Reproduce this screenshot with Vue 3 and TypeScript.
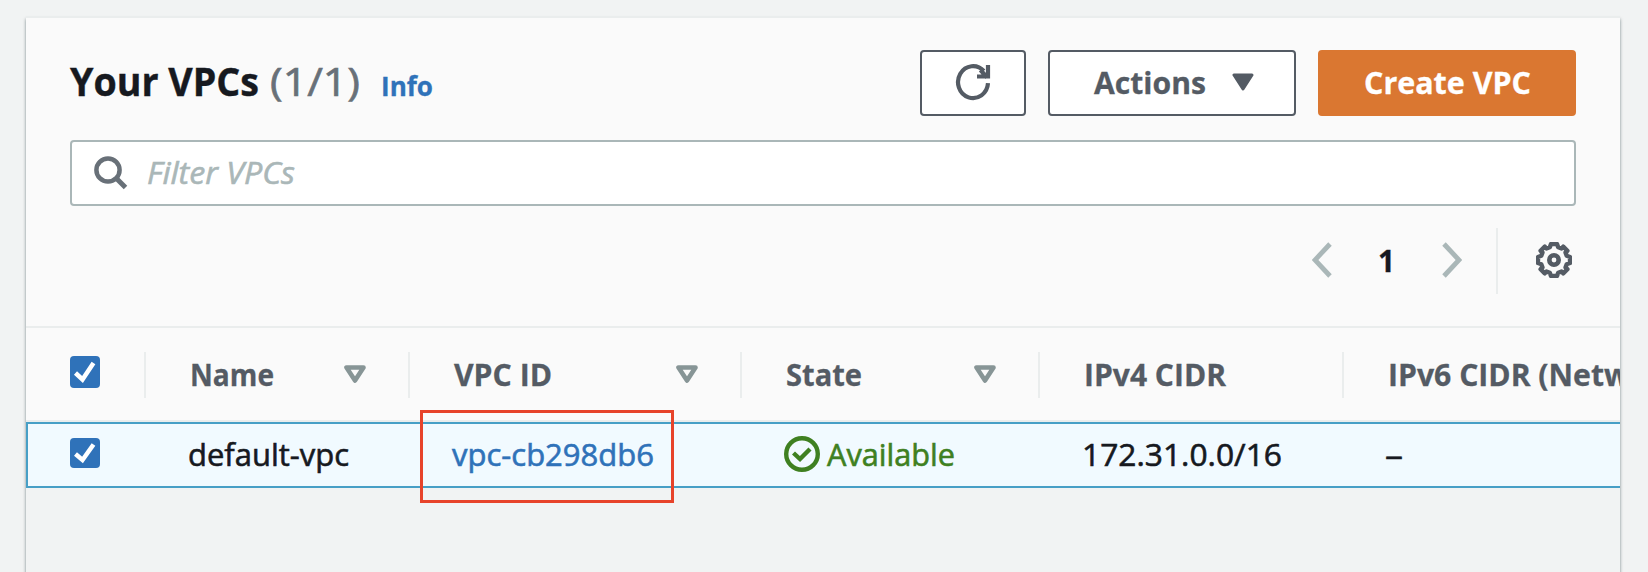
<script setup lang="ts">
import type { Directive } from 'vue'

interface Column {
  key: string
  label: string
  width: number
  sortable: boolean
}

// Sets a label to a given advance width, in pixels, by condensing its glyphs.
const vFit: Directive<HTMLElement, number> = {
  mounted(el, binding) {
    const natural = el.getBoundingClientRect().width
    el.style.transform = `scaleX(${binding.value / natural})`
    el.style.marginRight = `${binding.value - natural}px`
  },
}

const columns: Column[] = [
  { key: 'name', label: 'Name', width: 84, sortable: true },
  { key: 'id', label: 'VPC ID', width: 98, sortable: true },
  { key: 'state', label: 'State', width: 76, sortable: true },
  { key: 'ipv4', label: 'IPv4 CIDR', width: 142, sortable: false },
  { key: 'ipv6', label: 'IPv6 CIDR (Network border group)', width: 509, sortable: false },
]
</script>

<template>
  <main class="page">
    <section class="panel">
      <header class="top">
        <div class="title-row">
          <h1><span v-fit="189" class="t">Your VPCs</span></h1>
          <span v-fit="90" class="t count">(1/1)</span>
          <a v-fit="52" class="t info">Info</a>
          <div class="buttons">
            <button class="btn refresh" aria-label="Refresh">
              <svg width="36" height="38" viewBox="0 0 36 38">
                <path d="M33 20.200a15 16 0 1 1-4.200-12.200" fill="none" stroke="currentColor" stroke-width="4.200" />
                <path d="M33 2v11.500H22M32 14.500L25.500 7" fill="none" stroke="currentColor" stroke-width="4.200" />
              </svg>
            </button>
            <button class="btn actions">
              <span v-fit="112" class="t">Actions</span>
              <svg class="caret" width="22" height="18" viewBox="0 0 22 18">
                <path d="M2 2h18l-9 14z" fill="currentColor" stroke="currentColor" stroke-width="3" stroke-linejoin="round" />
              </svg>
            </button>
            <button class="btn primary"><span v-fit="167" class="t">Create VPC</span></button>
          </div>
        </div>
        <div class="search">
          <svg width="34" height="34" viewBox="0 0 34 34">
            <circle cx="14" cy="14" r="11.600" fill="none" stroke="#687078" stroke-width="4.500" />
            <path d="M22 22l9.500 9.500" stroke="#687078" stroke-width="5" />
          </svg>
          <span v-fit="148" class="t placeholder">Filter VPCs</span>
        </div>
        <div class="pager">
          <svg class="prev" width="20" height="36" viewBox="0 0 20 36">
            <path d="M18 2L3 18l15 16" />
          </svg>
          <span v-fit="17" class="t current">1</span>
          <svg class="next" width="20" height="36" viewBox="0 0 20 36">
            <path d="M2 2l15 16L2 34" />
          </svg>
          <div class="settings">
            <svg width="36" height="36" viewBox="-18 -18 36 36" fill="none" stroke="#545b64">
              <path
                stroke-width="4.400"
                stroke-linejoin="round"
                d="M-3-16H3L4.200-12.700L7.500-11.500L9.200-13.400L13.400-9.200L11.500-7.500L12.700-4.200L16-3V3L12.700 4.200L11.500 7.500L13.400 9.200L9.200 13.400L7.500 11.500L4.200 12.700L3 16H-3L-4.200 12.700L-7.500 11.500L-9.200 13.400L-13.400 9.200L-11.500 7.500L-12.700 4.200L-16 3V-3L-12.700-4.200L-11.500-7.500L-13.400-9.200L-9.200-13.400L-7.500-11.500L-4.200-12.700Z"
              />
              <circle r="4.700" stroke-width="4.600" />
            </svg>
          </div>
        </div>
      </header>

      <div class="row head">
        <div class="cell select">
          <svg class="box" width="30" height="32" viewBox="0 0 30 32">
            <rect width="30" height="32" rx="4" />
            <path d="M5.500 17l7 6.500L23.500 7" />
          </svg>
        </div>
        <div v-for="col in columns" :key="col.key" class="cell">
          <span v-fit="col.width" class="t">{{ col.label }}</span>
          <svg v-if="col.sortable" class="sort" width="22" height="18" viewBox="0 0 22 18">
            <path d="M2.500 2.500h17L11 15.500z" fill="none" stroke="#879596" stroke-width="4.600" stroke-linejoin="round" />
          </svg>
        </div>
      </div>

      <div class="row body">
        <div class="cell select">
          <svg class="box" width="30" height="30" viewBox="0 0 30 30">
            <rect width="30" height="30" rx="4" />
            <path d="M5.500 16l7 6L23.500 6.500" />
          </svg>
        </div>
        <div class="cell"><span v-fit="161" class="t">default-vpc</span></div>
        <div class="cell marked"><a v-fit="202" class="t link">vpc-cb298db6</a></div>
        <div class="cell state">
          <svg width="36" height="36" viewBox="0 0 36 36" fill="none" stroke="currentColor">
            <circle cx="18" cy="18" r="15.800" stroke-width="4.400" />
            <path d="M9.500 17l6.500 6 10-10" stroke-width="4.400" />
          </svg>
          <span v-fit="128" class="t">Available</span>
        </div>
        <div class="cell"><span v-fit="200" class="t">172.31.0.0/16</span></div>
        <div class="cell dash"><span v-fit="18" class="t">–</span></div>
      </div>
    </section>
  </main>
</template>

<style>
body {
  margin: 0;
  overflow: hidden;
}
</style>

<style scoped>
* {
  box-sizing: border-box;
}
.page {
  height: 572px;
  padding: 16px 28px 0 26px;
  overflow: hidden;
  background: #f1f3f3;
  color: #16191f;
  font: 400 31px/44px 'Open Sans', 'Noto Sans', sans-serif;
}
.panel {
  width: 1594px;
  height: 600px;
  border-top: 2px solid #eaeded;
  box-shadow: 0 3px 3px 0 rgba(0, 28, 36, 0.5);
  background: #f1f3f3;
}
.t {
  position: relative;
  top: -1px;
  display: inline-block;
  flex: none;
  white-space: nowrap;
  transform-origin: 0 50%;
}
.top {
  height: 310px;
  padding: 32px 44px 0;
  border-bottom: 2px solid #eaeded;
  background: #fafafa;
}
.title-row {
  display: flex;
  height: 66px;
}
h1 {
  margin: 0;
  font-size: 39px;
  font-weight: 700;
  line-height: 64px;
  -webkit-text-stroke: 0.4px currentColor;
}
.count {
  margin-left: 11px;
  color: #687078;
  font-size: 39px;
  line-height: 64px;
  -webkit-text-stroke: 0.7px currentColor;
}
.info {
  margin-left: 21px;
  color: #2f72b9;
  font-size: 26px;
  font-weight: 700;
  line-height: 74px;
}
.buttons {
  display: flex;
  gap: 22px;
  margin-left: auto;
}
.btn {
  display: flex;
  align-items: center;
  height: 66px;
  padding: 0;
  border: 2px solid #545b64;
  border-radius: 4px;
  background: #fff;
  color: #545b64;
  font: 700 31px/44px 'Open Sans', 'Noto Sans', sans-serif;
}
.btn .t,
.head .t,
.info,
.current {
  -webkit-text-stroke: 0.3px currentColor;
}
.refresh {
  width: 106px;
  padding: 0 0 2px 33px;
}
.actions {
  width: 248px;
  padding-left: 44px;
}
.caret {
  margin: 0 0 2px 26px;
}
.primary {
  width: 258px;
  padding-left: 44px;
  border-color: #da7731;
  background: #da7731;
  color: #fff;
}
.search {
  display: flex;
  align-items: center;
  height: 66px;
  margin-top: 24px;
  padding-left: 22px;
  border: 2px solid #aab7b8;
  border-radius: 4px;
  background: #fff;
}
.placeholder {
  margin-left: 19px;
  color: #aab7b8;
  font-style: italic;
  -webkit-text-stroke: 0.6px currentColor;
}
.pager {
  display: flex;
  align-items: center;
  justify-content: flex-end;
  height: 66px;
  margin-top: 22px;
}
.prev,
.next {
  margin-top: -2px;
  fill: none;
  stroke: #aab7b8;
  stroke-width: 4.800;
}
.current {
  margin-left: 46px;
  font-weight: 700;
}
.next {
  margin-left: 47px;
}
.settings {
  display: flex;
  align-items: center;
  width: 80px;
  height: 66px;
  margin-left: 34px;
  padding: 0 0 2px 38px;
  border-left: 2px solid #eaeded;
}
.row {
  display: grid;
  grid-template-columns: 120px 264px 332px 298px 304px 276px;
}
.cell {
  display: flex;
  align-items: center;
  min-width: 0;
}
.head {
  height: 94px;
  overflow: hidden;
  border-bottom: 2px solid #eaeded;
  background: #fafafa;
  color: #545b64;
  font-weight: 700;
}
.head .cell {
  height: 46px;
  margin-top: 24px;
  padding-left: 44px;
  border-right: 2px solid #eaeded;
}
.head .cell:last-child {
  border: 0;
}
.sort {
  margin: 0 42px 2px auto;
}
.box {
  flex: none;
}
.box rect {
  fill: #2f72b9;
}
.box path {
  fill: none;
  stroke: #fff;
  stroke-width: 4.500;
}
.head .box {
  margin-bottom: 6px;
}
.body {
  height: 66px;
  border: 2px solid #479fc6;
  border-right: 0;
  background: #f1faff;
}
.body .cell {
  height: 62px;
  padding-left: 40px;
}
.body .t {
  -webkit-text-stroke: 0.6px currentColor;
}
.body .select {
  padding: 0 0 4px 42px;
}
.body .dash {
  padding-left: 39px;
}
.link {
  color: #2f72b9;
}
.marked {
  position: relative;
}
.marked::after {
  content: '';
  position: absolute;
  top: -14px;
  left: 8px;
  box-sizing: border-box;
  width: 254px;
  height: 93px;
  border: 3px solid #e7432a;
}
.state {
  color: #3f8021;
}
.body .state {
  gap: 7px;
}
.state svg {
  margin-bottom: 2px;
}
</style>
